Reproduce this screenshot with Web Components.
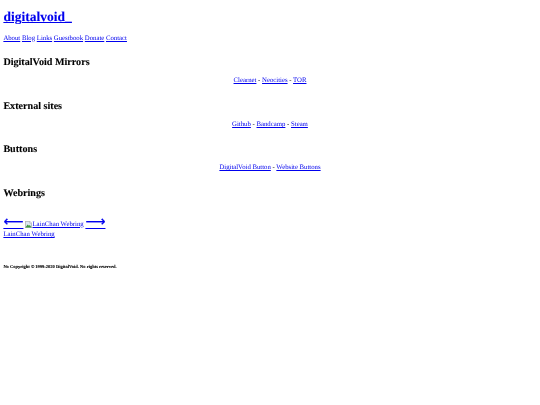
<!DOCTYPE html>
<html>
<head>
<meta charset="utf-8">
<title>digitalvoid_</title>
<style>
  html, body { margin: 0; background: #fff; }
  body { font-family: "Liberation Serif", serif; font-size: 6.75px; color: #000; text-rendering: geometricPrecision; filter: blur(.25px); min-height: 405px; }
  a { color: #00e; }
</style>
</head>
<body>
<template id="site-header-tpl">
  <style>
    :host { display: block; padding: 9px 3.375px 0; }
    h1 { margin: 0; font-size: 13.5px; line-height: 15.5px; font-weight: bold; -webkit-text-stroke: .1px currentColor; }
    nav { margin-top: 10px; line-height: 7.76px; }
    a { color: #00e; }
  </style>
  <h1><a href="#">digitalvoid_</a></h1>
  <nav><slot></slot></nav>
</template>

<template id="link-section-tpl">
  <style>
    :host { display: block; padding: 0 3.375px; }
    h2 { margin: 0; font-size: 10.125px; line-height: 11.64px; font-weight: bold; -webkit-text-stroke: .1px currentColor; }
    .links { margin-top: 8.4px; text-align: center; line-height: 7.76px; }
  </style>
  <h2><slot name="title"></slot></h2>
  <div class="links"><slot></slot></div>
</template>

<template id="web-ring-tpl">
  <style>
    :host { display: block; padding: 0 3.375px; }
    h2 { margin: 0; font-size: 10.125px; line-height: 11.64px; font-weight: bold; -webkit-text-stroke: .1px currentColor; }
    .ring { margin-top: 14px; display: flex; align-items: flex-end; gap: 1.7px; height: 16px; }
    a { color: #00e; }
    .arrow { font-family: "DejaVu Sans", sans-serif; font-size: 14px; line-height: 16px; display: block; text-underline-offset: 2.2px; text-decoration-thickness: 1px; -webkit-text-stroke: .2px currentColor; }
    .label { display: flex; align-items: center; line-height: 7.76px; margin-bottom: 1px; }
    svg { display: block; width: 7px; height: 7px; margin-right: .3px; }
    .below { line-height: 7.76px; margin-top: 1.5px; }
  </style>
  <h2>Webrings</h2>
  <div class="ring">
    <a class="arrow" href="#">⟵</a>
    <a class="label" href="#"><svg viewBox="0 0 16 16"><path d="M.5.5h10l5 5v10H.5z" fill="#dfe8f4" stroke="#8c8c8c" stroke-width="1.5"/><path d="M1 15l5-7 3 3 2-2 4 6z" fill="#3f9a3f"/><path d="M11 1v4h4" fill="#fff" stroke="#8c8c8c"/></svg>LainChan Webring</a>
    <a class="arrow" href="#">⟶</a>
  </div>
  <div class="below"><a href="#">LainChan Webring</a></div>
</template>

<template id="site-footer-tpl">
  <style>
    :host { display: block; padding: 0 3.375px; font-size: 4.5px; font-weight: bold; line-height: 5.2px; -webkit-text-stroke: .08px currentColor; }
  </style>
  <slot></slot>
</template>

<site-header>
  <a href="#">About</a> <a href="#">Blog</a> <a href="#">Links</a> <a href="#">Guestbook</a> <a href="#">Donate</a> <a href="#">Contact</a>
</site-header>
<link-section style="margin-top:15.2px">
  <span slot="title">DigitalVoid Mirrors</span>
  <a href="#">Clearnet</a> - <a href="#">Neocities</a> - <a href="#">TOR</a>
</link-section>
<link-section style="margin-top:15.7px">
  <span slot="title">External sites</span>
  <a href="#">Github</a> - <a href="#">Bandcamp</a> - <a href="#">Steam</a>
</link-section>
<link-section style="margin-top:15.7px">
  <span slot="title">Buttons</span>
  <a href="#">DigitalVoid Button</a> - <a href="#">Website Buttons</a>
</link-section>
<web-ring style="margin-top:15.7px"></web-ring>
<site-footer style="margin-top:25.5px">No Copyright © 1999-2020 DigitalVoid. No rights reserved.</site-footer>

<script>
  for (const [name, tpl] of [
    ['site-header', 'site-header-tpl'],
    ['link-section', 'link-section-tpl'],
    ['web-ring', 'web-ring-tpl'],
    ['site-footer', 'site-footer-tpl'],
  ]) {
    customElements.define(name, class extends HTMLElement {
      constructor() {
        super();
        this.attachShadow({ mode: 'open' });
        this.shadowRoot.appendChild(document.getElementById(tpl).content.cloneNode(true));
      }
    });
  }
</script>
</body>
</html>
